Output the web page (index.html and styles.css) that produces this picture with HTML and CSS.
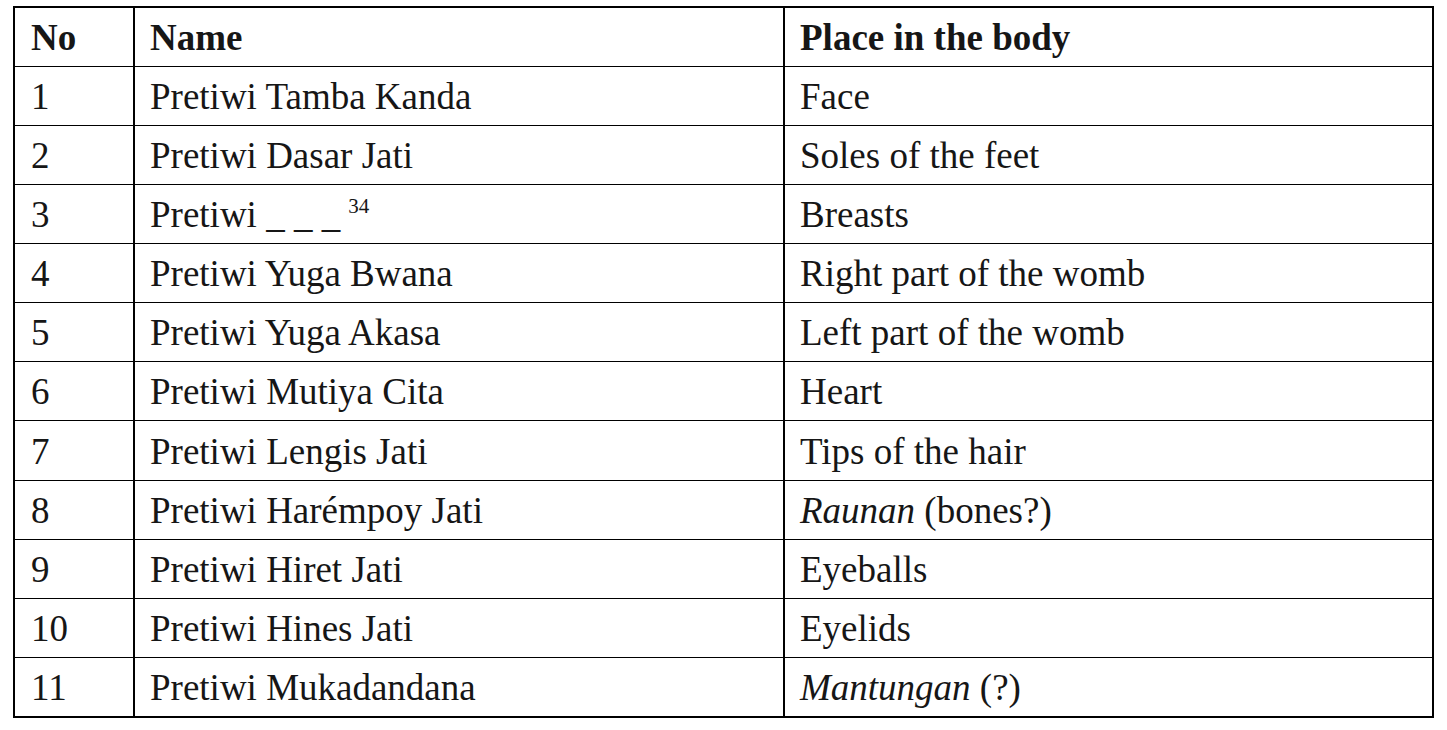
FILE: index.html
```html
<!DOCTYPE html>
<html>
<head>
<meta charset="utf-8">
<link rel="stylesheet" href="styles.css">
</head>
<body>
<table class="grid">
  <colgroup>
    <col class="c-no">
    <col class="c-name">
    <col class="c-place">
  </colgroup>
  <thead>
    <tr><th>No</th><th>Name</th><th>Place in the body</th></tr>
  </thead>
  <tbody>
    <tr><td>1</td><td>Pretiwi Tamba Kanda</td><td>Face</td></tr>
    <tr><td>2</td><td>Pretiwi Dasar Jati</td><td>Soles of the feet</td></tr>
    <tr><td>3</td><td>Pretiwi _ _ _<sup class="note">34</sup></td><td>Breasts</td></tr>
    <tr><td>4</td><td>Pretiwi Yuga Bwana</td><td>Right part of the womb</td></tr>
    <tr><td>5</td><td>Pretiwi Yuga Akasa</td><td>Left part of the womb</td></tr>
    <tr><td>6</td><td>Pretiwi Mutiya Cita</td><td>Heart</td></tr>
    <tr><td>7</td><td>Pretiwi Lengis Jati</td><td>Tips of the hair</td></tr>
    <tr><td>8</td><td>Pretiwi Harémpoy Jati</td><td><em>Raunan</em> (bones?)</td></tr>
    <tr><td>9</td><td>Pretiwi Hiret Jati</td><td>Eyeballs</td></tr>
    <tr><td>10</td><td>Pretiwi Hines Jati</td><td>Eyelids</td></tr>
    <tr><td>11</td><td>Pretiwi Mukadandana</td><td><em>Mantungan</em> (?)</td></tr>
  </tbody>
</table>
</body>
</html>
```

FILE: styles.css
```css
html, body {
  margin: 0;
  padding: 0;
  background: #ffffff;
}

body {
  font-family: "Liberation Serif", "Times New Roman", serif;
  color: #161616;
}

.grid {
  margin: 6px 0 0 13px;
  width: 1419px;
  height: 712px;
  table-layout: fixed;
  border-collapse: collapse;
  border: 2px solid #000;
  font-size: 37px;
}

.c-no { width: 120px; }
.c-name { width: 650px; }
.c-place { width: 649px; }

.grid th,
.grid td {
  height: 57px;
  padding: 1px 0 0 15px;
  text-align: left;
  vertical-align: middle;
  border-left: 2px solid #000;
  border-right: 2px solid #000;
  border-top: 1px solid #000;
  border-bottom: 1px solid #000;
  line-height: normal;
  white-space: nowrap;
}

.grid th:first-child,
.grid td:first-child {
  padding-left: 16px;
}

.grid th {
  font-weight: bold;
}

.grid em {
  font-style: italic;
}

.note {
  font-size: 21px;
  vertical-align: 14px;
  line-height: 0;
  margin-left: 8px;
}
```
